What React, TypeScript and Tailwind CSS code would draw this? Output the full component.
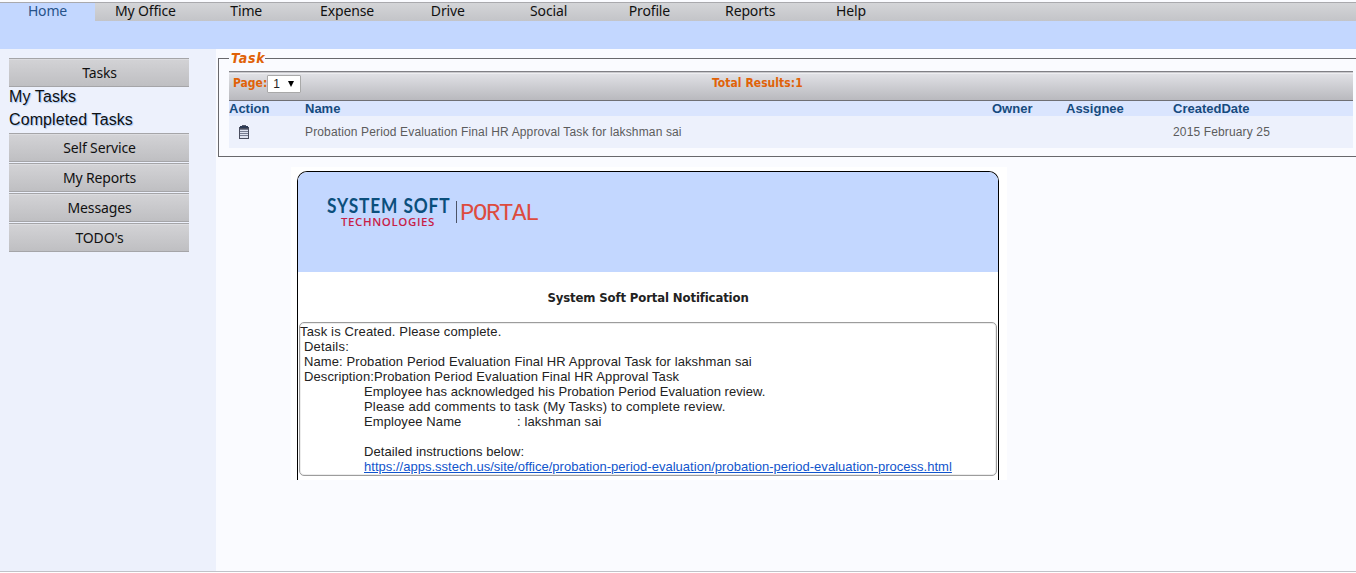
import React from "react";

const tahoma = "font-['Noto_Sans',sans-serif] tracking-[-0.15px]";
const tahomaBold = "font-['DejaVu_Sans_Condensed','DejaVu_Sans',sans-serif] [font-stretch:75%] font-bold";

const navItems = ["My Office", "Time", "Expense", "Drive", "Social", "Profile", "Reports", "Help"];

function SideButton({ label }: { label: string }) {
  return (
    <button
      className={`${tahoma} flex h-[29px] w-[180px] items-center justify-center border-y border-[#a5a5a8] bg-linear-to-b from-[#d3d3d6] to-[#bfbfc2] pb-px pl-px text-[14px] text-[#111] shadow-[inset_0_1px_0_#dcdcdf]`}
    >
      {label}
    </button>
  );
}

function ClipboardIcon() {
  return (
    <svg width="10" height="14" viewBox="0 0 10 14" shapeRendering="crispEdges">
      <rect x="0" y="2" width="10" height="12" fill="#4a4e5e" />
      <rect x="1" y="4" width="8" height="9" fill="#dfe3f0" />
      <rect x="3" y="0" width="4" height="1" fill="#555a6c" />
      <rect x="1" y="1" width="8" height="2" fill="#2c3a54" />
      <path d="M1 4.5h8M1 6.5h8M1 8.5h8M1 10.5h8" stroke="#777d91" strokeWidth="1" />
    </svg>
  );
}

function Logo() {
  return (
    <div className="flex pt-[24px] pl-[29px]">
      <div className="flex w-[129px] flex-col">
        <span className="h-[19px] origin-left scale-x-[0.865] text-[20px] leading-[18px] font-bold tracking-[1px] whitespace-nowrap text-[#0b4f7c] font-['Lato',sans-serif]">
          SYSTEM SOFT
        </span>
        <span className="pl-[14px] text-[11.5px] leading-[13px] font-semibold tracking-[0.6px] whitespace-nowrap text-[#c81e48] font-['Open_Sans',sans-serif]">
          TECHNOLOGIES
        </span>
      </div>
      <div className="mt-[5px] h-[22px] w-px shrink-0 bg-[#4c5468]" />
      <span className="mt-[6px] ml-[3px] text-[24px] leading-[24px] tracking-[-1.4px] text-[#dd4b3e] font-['Liberation_Mono',monospace]">
        PORTAL
      </span>
    </div>
  );
}

function TaskPanel() {
  const cols = "grid grid-cols-[76px_687px_74px_107px_1fr]";
  return (
    <fieldset className="mt-[1px] -mr-[1px] ml-[2px] h-[107px] border border-[#68686c] pr-[3px] pl-[10px]">
      <legend className={`${tahomaBold} h-[16px] pl-[2px] text-[14px] leading-[16px] tracking-[0.75px] text-[#e06208] italic`}>
        Task
      </legend>
      <div className="mt-[5px] flex h-[30px] border-t border-b border-t-[#808085] border-b-[#6f6f74] bg-linear-to-b from-[#e3e4e8] to-[#b9b9be] shadow-[inset_0_1px_0_#c9c9cd,inset_0_2px_0_#ededf0]">
        <div className="flex w-[483px] pt-[3px] pl-[4px] text-[12px] text-[#e06208]">
          <span className={`${tahomaBold} leading-[16px]`}>Page:</span>
          <div className="flex h-[18px] w-[34px] items-center justify-between rounded-[1px] border border-[#a9a9a9] bg-white pr-[6px] pl-[5px] text-[12px] font-normal text-[#222] font-['Liberation_Sans',sans-serif]">
            <span>1</span>
            <svg width="6" height="6" viewBox="0 0 6 6">
              <path d="M0 0h6L3 6z" fill="#000" />
            </svg>
          </div>
        </div>
        <div className={`${tahomaBold} pt-[3px] text-[12px] leading-[16px] tracking-[0.05px] text-[#e06208]`}>Total Results:1</div>
      </div>
      <div className={`${cols} h-[15px] bg-[#dae5fe] text-[13px] leading-[15px] font-bold text-[#164b7e] font-['Liberation_Sans',sans-serif]`}>
        <span>Action</span>
        <span>Name</span>
        <span>Owner</span>
        <span>Assignee</span>
        <span>CreatedDate</span>
      </div>
      <div className={`${cols} h-[32px] items-center bg-[#edf1fc] text-[12px] text-[#5c5c5c] font-['Liberation_Sans',sans-serif]`}>
        <span className="pl-[10px]">
          <ClipboardIcon />
        </span>
        <span className="tracking-[0.14px]">Probation Period Evaluation Final HR Approval Task for lakshman sai</span>
        <span />
        <span />
        <span className="tracking-[0.14px]">2015 February 25</span>
      </div>
    </fieldset>
  );
}

function Notification() {
  return (
    <div className="mt-[10px] ml-[75px] h-[313px] w-[716px] bg-white px-[6px] pt-[4px] pr-[8px]">
      <div className="h-[309px] rounded-t-[10px] border border-b-0 border-black">
        <div className="h-[100px] rounded-t-[9px] bg-[#c3d7ff]">
          <Logo />
        </div>
        <h1 className={`${tahomaBold} h-[50px] pt-px text-center text-[13px] leading-[50px] tracking-[-0.13px] text-[#222]`}>
          System Soft Portal Notification
        </h1>
        <div className="mx-[1px] h-[154px] rounded-[5px] border border-[#9c9c9c] pt-[1px] text-[13px] leading-[15px] whitespace-pre text-[#222] shadow-[inset_0_0_0_1px_#ececec] font-['Liberation_Sans',sans-serif]">
          <p className="tracking-[0.15px]">Task is Created. Please complete.</p>
          <p className="pl-[4px] tracking-[0.2px]">Details:</p>
          <p className="pl-[4px] tracking-[0.11px]">Name: Probation Period Evaluation Final HR Approval Task for lakshman sai</p>
          <p className="pl-[4px] tracking-[0.11px]">Description:Probation Period Evaluation Final HR Approval Task</p>
          <div className="pl-[64px]">
            <p className="tracking-[0.05px]">Employee has acknowledged his Probation Period Evaluation review.</p>
            <p className="tracking-[0.17px]">Please add comments to task (My Tasks) to complete review.</p>
            <p className="flex tracking-[0.1px]">
              <span className="w-[153px]">Employee Name</span>
              <span>: lakshman sai</span>
            </p>
            <p className="pt-[15px] tracking-[0.07px]">Detailed instructions below:</p>
            <a className="tracking-[0.02px] text-[#1155cc] underline">
              https://apps.sstech.us/site/office/probation-period-evaluation/probation-period-evaluation-process.html
            </a>
          </div>
        </div>
      </div>
    </div>
  );
}

export default function App() {
  return (
    <div className="flex h-[573px] w-[1356px] flex-col overflow-hidden bg-[#fafbff]">
      <nav className={`${tahoma} mt-[2px] flex h-[19px] shrink-0 border-t border-[#a9a9ad] bg-linear-to-b from-[#d4d5d8] to-[#c3c4c8] text-center text-[14px] leading-[16px] text-[#111]`}>
        <a className="w-[95px] bg-[#c3d7ff] text-[#27538a]">Home</a>
        {navItems.map((item) => (
          <a key={item} className="w-[100.8px]">
            {item}
          </a>
        ))}
      </nav>
      <div className="h-[28px] shrink-0 bg-[#c3d7ff]" />
      <div className="flex h-[522px] shrink-0">
        <aside className="w-[216px] shrink-0 bg-[#edf1fc] pt-[9px] pl-[9px]">
          <SideButton label="Tasks" />
          <div className="flex h-[46px] flex-col text-[16px] leading-[19px] tracking-[0.1px] text-[#111] font-['Liberation_Sans',sans-serif] [text-shadow:1px_1px_1px_#9cc4f4]">
            <a className="h-[23px]">My Tasks</a>
            <a className="h-[23px]">Completed Tasks</a>
          </div>
          <div className="flex flex-col gap-px">
            <SideButton label="Self Service" />
            <SideButton label="My Reports" />
            <SideButton label="Messages" />
            <SideButton label="TODO's" />
          </div>
        </aside>
        <main className="flex min-w-0 grow flex-col">
          <TaskPanel />
          <Notification />
        </main>
      </div>
      <div className="h-px shrink-0 bg-[#c0c2c8]" />
      <div className="h-px shrink-0 bg-white" />
    </div>
  );
}
